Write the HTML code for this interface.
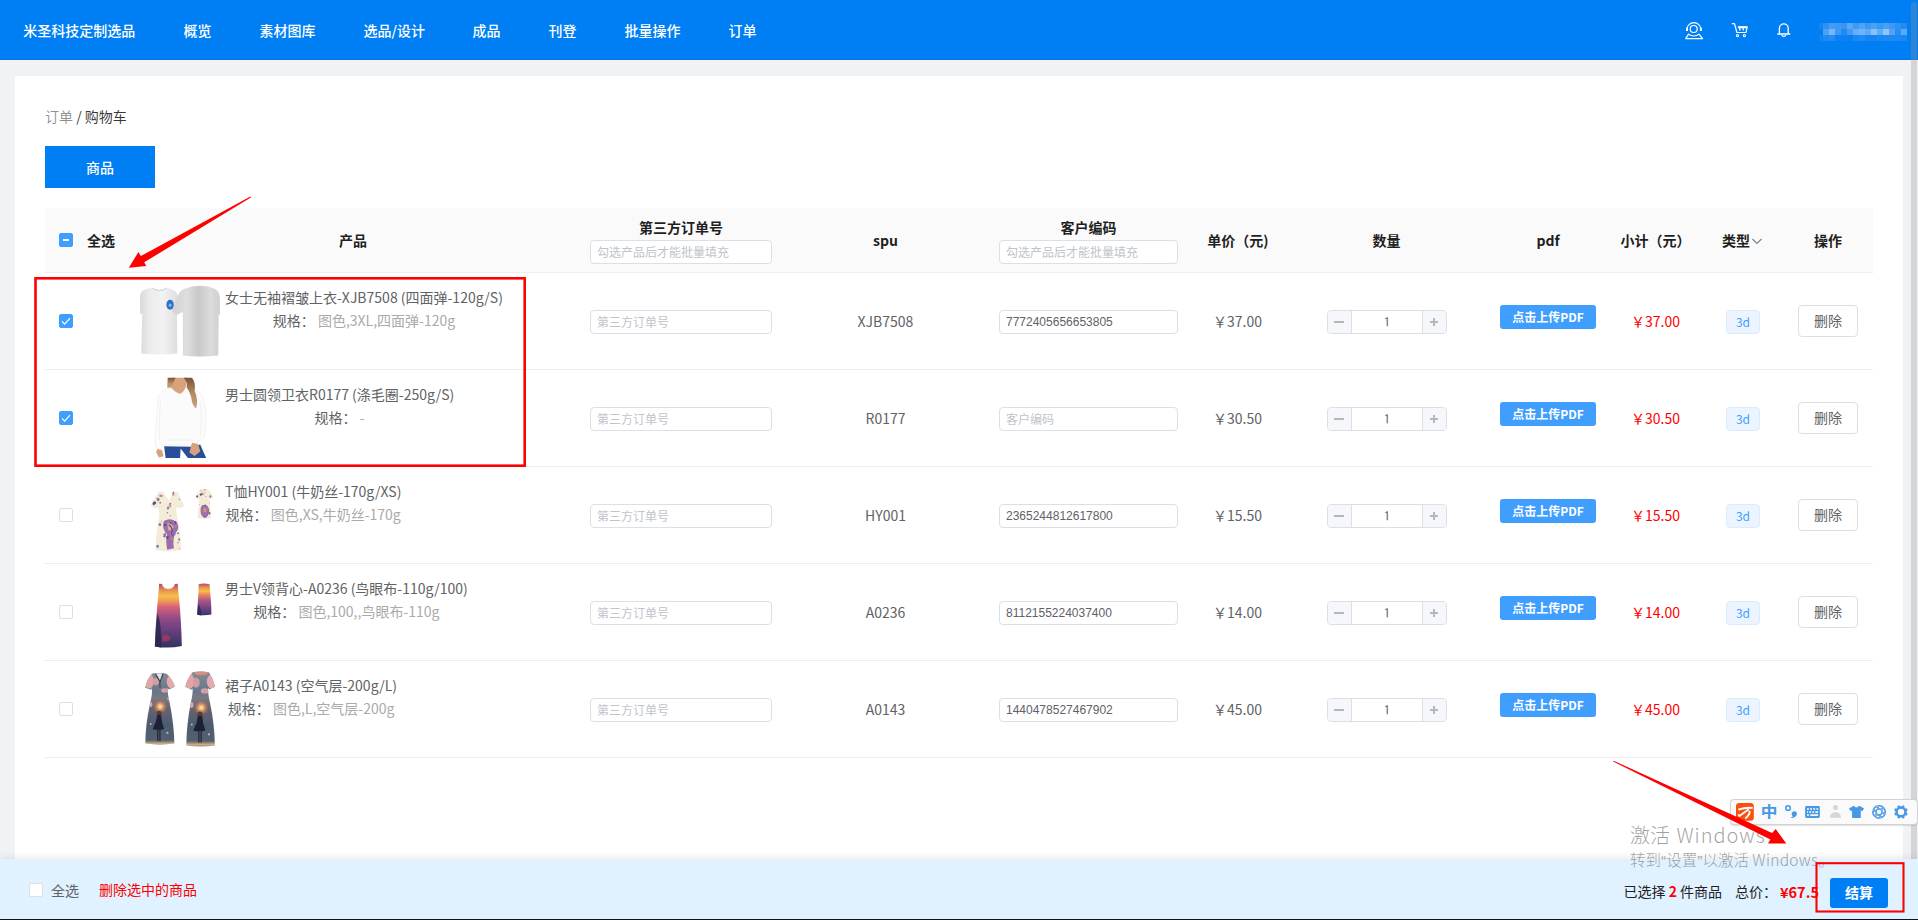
<!DOCTYPE html>
<html lang="zh-CN">
<head>
<meta charset="utf-8">
<title>购物车</title>
<style>
html,body{margin:0;padding:0;background:#f0f2f5;}
body{font-family:"Noto Sans CJK SC","Liberation Sans",sans-serif;font-size:14px;color:#606266;overflow:hidden;}
#app{position:relative;width:1918px;height:920px;overflow:hidden;background:#f0f2f5;}
#app *{box-sizing:border-box;}
.abs{position:absolute;}
.hdr{position:absolute;left:0;top:0;width:1918px;height:60px;background:#007ff4;border-bottom:1px solid #0a72e2;box-shadow:0 1px 0 #f6f4f0;}
.nav{position:absolute;top:0;height:60px;line-height:61px;color:#fff;font-size:14px;font-weight:500;white-space:nowrap;}
.card{position:absolute;left:15px;top:76px;width:1888px;height:860px;background:#fff;}
.bc{position:absolute;left:45px;top:105px;line-height:22px;font-size:14px;white-space:nowrap;color:rgba(0,0,0,.45);}
.bc b{font-weight:400;color:rgba(0,0,0,.8);}
.tabbtn{position:absolute;left:45px;top:146px;width:110px;height:42px;background:#007ff4;color:#fff;font-size:14px;font-weight:500;text-align:center;line-height:43px;}
.thead{position:absolute;left:45px;top:208px;width:1828px;height:65px;background:#fafafa;border-bottom:1px solid #ebeef5;}
.th{position:absolute;width:200px;margin-left:-100px;text-align:center;font-weight:700;color:#1f1f1f;font-size:14px;line-height:24px;white-space:nowrap;}
.cb{position:absolute;left:59px;top:41px;width:14px;height:14px;border:1px solid #dcdfe6;border-radius:2px;background:#fff;}
.cb.on{background:#409eff;border-color:#409eff;}
.cb svg{position:absolute;left:-1px;top:-1px;}
.row{position:absolute;left:0;width:1918px;height:97px;}
.row:after{content:"";position:absolute;left:45px;top:96px;width:1828px;height:1px;background:#ebeef5;}
.pimg{position:absolute;left:135px;top:3px;width:90px;height:90px;}
.pimg svg{display:block;}
.ptxt{position:absolute;left:225px;top:13px;text-align:center;white-space:nowrap;line-height:23px;color:#606266;font-size:14px;}
.sv{color:#aaa;}
.inp{position:absolute;top:37px;height:24px;border:1px solid #dcdfe6;border-radius:4px;background:#fff;font-size:12px;line-height:21px;padding-left:6px;white-space:nowrap;}
.i1{left:590px;width:182px;}
.i2{left:999px;width:179px;}
.ph{color:#c0c4cc;}
.val{font-family:"Liberation Sans",sans-serif;color:#606266;position:relative;top:-0.7px;}
.cell{position:absolute;top:36.4px;width:200px;margin-left:-100px;text-align:center;line-height:24px;white-space:nowrap;}
.spu{left:885.5px;}
.price{left:1237.5px;}
.sub{left:1655.5px;color:#ff0000;}
.qty{position:absolute;left:1327px;top:37px;width:120px;height:24px;border:1px solid #dcdfe6;border-radius:4px;background:#fff;overflow:hidden;}
.qb{position:absolute;top:0;width:24px;height:22px;background:#f5f7fa;}
.qb.minus{left:0;border-right:1px solid #dcdfe6;}
.qb.plus{right:0;border-left:1px solid #dcdfe6;}
.qb i{position:absolute;left:6px;top:10px;width:9.5px;height:1.8px;background:#b4b7bc;}
.qb.plus i{left:7px;width:8px;top:10px;}
.qb b{position:absolute;left:10.1px;top:6.9px;width:1.8px;height:8px;background:#b4b7bc;}
.qv{position:absolute;left:24px;right:24px;top:0.6px;line-height:22px;text-align:center;font-family:IPAGothic,NanumGothic,"Liberation Sans",sans-serif;font-size:13px;color:#606266;}
.pdfbtn{position:absolute;left:1500px;top:32px;width:96px;height:24px;border-radius:3px;background:#409eff;color:#fff;font-size:12px;font-weight:700;text-align:center;line-height:23px;white-space:nowrap;}
.tag{position:absolute;left:1726px;top:37px;width:34px;height:24px;border:1px solid #d9ecff;border-radius:4px;background:#ecf5ff;color:#409eff;font-size:12px;line-height:21px;text-align:center;}
.del{position:absolute;left:1798px;top:32px;width:60px;height:32px;border:1px solid #dcdfe6;border-radius:4px;background:#fff;color:#606266;font-size:14px;line-height:28px;text-align:center;}
.foot{position:absolute;left:0;top:859px;width:1918px;height:61px;background:#e0f1ff;box-shadow:0 -2px 8px rgba(0,0,0,.08);}
.foot .cb{left:29px;top:24px;}
.ft{position:absolute;white-space:nowrap;font-size:14px;line-height:24px;}
.paybtn{position:absolute;left:1830px;top:878px;width:58px;height:30px;border-radius:3px;background:#007ff4;color:#fff;font-size:14px;font-weight:700;text-align:center;line-height:29px;}
.redbox{position:absolute;border:2px solid #ff0000;}
.ime{position:absolute;left:1730.3px;top:799px;width:187.6px;height:25.8px;background:#fafafa;border:1px solid #d2d2d2;border-radius:4px;box-shadow:0 0.5px 1px rgba(0,0,0,.12);}
.wm{position:absolute;left:1630px;white-space:nowrap;color:rgba(100,100,100,.6);font-weight:300;}
.q{font-family:"Liberation Sans",sans-serif;font-weight:400;}
.sbar{position:absolute;left:1911px;top:2px;width:6px;height:870px;background:rgba(150,150,155,.31);border-radius:3px;}
.blk{position:absolute;left:0;top:918.8px;width:1918px;height:2px;background:#101010;}

</style>
</head>
<body>
<div id="app">
<div class="card"></div>
<div class="hdr"></div>
<div class="nav" style="left:23.2px">米圣科技定制选品</div>
<div class="nav" style="left:183.5px">概览</div>
<div class="nav" style="left:259.5px">素材图库</div>
<div class="nav" style="left:363.5px">选品/设计</div>
<div class="nav" style="left:472.5px">成品</div>
<div class="nav" style="left:548.5px">刊登</div>
<div class="nav" style="left:624.5px">批量操作</div>
<div class="nav" style="left:728.5px">订单</div>
<svg class="abs" style="left:1678px;top:14px" width="130" height="32" viewBox="1678 14 130 32" fill="none" stroke="#fff" stroke-width="1.3" stroke-linecap="round" stroke-linejoin="round">
<circle cx="1693.7" cy="29" r="3.5" stroke-width="1.2"/>
<path d="M1687.0 28.8 A6.94 6.94 0 0 1 1700.8 28.8" stroke-width="1.2"/>
<rect x="1686.0" y="27.5" width="2" height="3.5" rx="0.5" fill="#fff" stroke="none"/>
<rect x="1699.9" y="27.5" width="2" height="3.5" rx="0.5" fill="#fff" stroke="none"/>
<path d="M1685.7 38.6 L1688.6 34.1 A8 8 0 0 0 1699 34.1 L1702.6 38.6 Z" stroke-width="1.2"/>
<path d="M1732.3 23.7 H1734.5 L1736.9 32.5 H1746 L1747.2 26.8 H1738.2" stroke-width="1.2"/>
<path d="M1738.4 27.4 H1746.9" stroke-width="1.8" stroke-linecap="butt"/>
<path d="M1739.8 27 V30.6 M1743.2 27 V30.6" stroke-width="1.3" stroke-linecap="butt"/>
<circle cx="1737.5" cy="35.6" r="1.1" stroke-width="1.1"/>
<circle cx="1744.4" cy="35.6" r="1.1" stroke-width="1.1"/>
<path d="M1779.4 33.6 V28.2 A4.4 4.4 0 0 1 1788.2 28.2 V33.6" stroke-width="1.3"/>
<path d="M1777.8 34 H1789.8" stroke-width="1.4"/>
<path d="M1781.9 35.4 Q1783.8 37.5 1785.7 35.4" stroke-width="1.2"/>
</svg>
<svg class="abs" style="left:1818px;top:22px" width="92" height="20" viewBox="1818 22 92 20" shape-rendering="crispEdges"><rect x="1818.5" y="23" width="4.55" height="6.05" fill="#1684f3"/><rect x="1823" y="23" width="6.05" height="6.05" fill="#2a92f5"/><rect x="1829" y="23" width="6.05" height="6.05" fill="#4a9af5"/><rect x="1835" y="23" width="6.05" height="6.05" fill="#3a9af6"/><rect x="1841" y="23" width="6.05" height="6.05" fill="#3a94f5"/><rect x="1847" y="23" width="6.05" height="6.05" fill="#58a8f8"/><rect x="1853" y="23" width="6.05" height="6.05" fill="#3f98f5"/><rect x="1859" y="23" width="6.05" height="6.05" fill="#4ea4f8"/><rect x="1865" y="23" width="6.05" height="6.05" fill="#3d98f5"/><rect x="1871" y="23" width="6.05" height="6.05" fill="#48a0f7"/><rect x="1877" y="23" width="6.05" height="6.05" fill="#3a98f6"/><rect x="1883" y="23" width="6.05" height="6.05" fill="#4a9ef6"/><rect x="1889" y="23" width="6.05" height="6.05" fill="#4098f5"/><rect x="1895" y="23" width="6.05" height="6.05" fill="#2c92f5"/><rect x="1901" y="23" width="6.05" height="6.05" fill="#2488f5"/><rect x="1818.5" y="29" width="4.55" height="6.05" fill="#007ff4"/><rect x="1823" y="29" width="6.05" height="6.05" fill="#4aa2f6"/><rect x="1829" y="29" width="6.05" height="6.05" fill="#78b6f8"/><rect x="1835" y="29" width="6.05" height="6.05" fill="#3f98f5"/><rect x="1841" y="29" width="6.05" height="6.05" fill="#1a8cf3"/><rect x="1847" y="29" width="6.05" height="6.05" fill="#4a98f3"/><rect x="1853" y="29" width="6.05" height="6.05" fill="#68aef8"/><rect x="1859" y="29" width="6.05" height="6.05" fill="#6ab6f8"/><rect x="1865" y="29" width="6.05" height="6.05" fill="#62a8f8"/><rect x="1871" y="29" width="6.05" height="6.05" fill="#86c2fa"/><rect x="1877" y="29" width="6.05" height="6.05" fill="#5aaef8"/><rect x="1883" y="29" width="6.05" height="6.05" fill="#92c2fa"/><rect x="1889" y="29" width="6.05" height="6.05" fill="#5c9ef5"/><rect x="1895" y="29" width="6.05" height="6.05" fill="#2890f5"/><rect x="1901" y="29" width="6.05" height="6.05" fill="#5ea8f8"/><rect x="1818.5" y="35" width="4.55" height="6.05" fill="#0e84f3"/><rect x="1823" y="35" width="6.05" height="6.05" fill="#1e8af3"/><rect x="1829" y="35" width="6.05" height="6.05" fill="#268cf3"/><rect x="1835" y="35" width="6.05" height="6.05" fill="#0a82f3"/><rect x="1841" y="35" width="6.05" height="6.05" fill="#0a82f3"/><rect x="1847" y="35" width="6.05" height="6.05" fill="#0880f3"/><rect x="1853" y="35" width="6.05" height="6.05" fill="#1a88f3"/><rect x="1859" y="35" width="6.05" height="6.05" fill="#1e8af3"/><rect x="1865" y="35" width="6.05" height="6.05" fill="#1486f3"/><rect x="1871" y="35" width="6.05" height="6.05" fill="#1284f3"/><rect x="1877" y="35" width="6.05" height="6.05" fill="#1a88f3"/><rect x="1883" y="35" width="6.05" height="6.05" fill="#1c8af3"/><rect x="1889" y="35" width="6.05" height="6.05" fill="#1c8af3"/><rect x="1895" y="35" width="6.05" height="6.05" fill="#1c8af3"/><rect x="1901" y="35" width="6.05" height="6.05" fill="#1a88f4"/></svg>

<div class="bc">订单 <b>/ 购物车</b></div>
<div class="tabbtn">商品</div>
<div class="thead"></div>
<span class="cb on" style="top:233px"><i class="abs" style="left:3px;top:5.4px;width:6px;height:1.3px;background:#fff"></i></span>
<div class="th" style="left:101px;top:228px">全选</div>
<div class="th" style="left:353px;top:228px">产品</div>
<div class="th" style="left:681px;top:214.5px">第三方订单号</div>
<div class="inp i1" style="top:240px"><span class="ph">勾选产品后才能批量填充</span></div>
<div class="th" style="left:885.5px;top:228px">spu</div>
<div class="th" style="left:1088.5px;top:214.5px">客户编码</div>
<div class="inp i2" style="top:240px"><span class="ph">勾选产品后才能批量填充</span></div>
<div class="th" style="left:1237.8px;top:228px">单价（元)</div>
<div class="th" style="left:1386.5px;top:228px">数量</div>
<div class="th" style="left:1548px;top:228px">pdf</div>
<div class="th" style="left:1655.5px;top:228px">小计（元）</div>
<div class="th" style="left:1736px;top:228px">类型</div>
<svg class="abs" style="left:1751px;top:236px" width="12" height="10" viewBox="0 0 12 10"><path d="M1.5 3 L6 7.5 L10.5 3" fill="none" stroke="#80838a" stroke-width="1.1"/></svg>
<div class="th" style="left:1828px;top:228px">操作</div>
<div class="row" style="top:273px">
<span class="cb on"><svg width="14" height="14" viewBox="0 0 14 14"><path d="M3 7.3 L5.65 10.2 L11 4.1" fill="none" stroke="#fff" stroke-width="1.15"/></svg></span>
<div class="pimg"><svg width="90" height="90" viewBox="135 276 90 90"><defs>
<linearGradient id="g1a" x1="0" x2="1" y1="0" y2="0"><stop offset="0" stop-color="#d9d9d9"/><stop offset=".25" stop-color="#ececec"/><stop offset=".6" stop-color="#f2f2f2"/><stop offset="1" stop-color="#dcdcdc"/></linearGradient>
<linearGradient id="g1b" x1="0" x2="1" y1="0" y2="0"><stop offset="0" stop-color="#d2d2d2"/><stop offset=".3" stop-color="#dedede"/><stop offset=".55" stop-color="#c9c9c9"/><stop offset=".8" stop-color="#dcdcdc"/><stop offset="1" stop-color="#cfcfcf"/></linearGradient>
<filter id="b1" x="-10%" y="-10%" width="120%" height="120%"><feGaussianBlur stdDeviation="0.35"/></filter>
</defs>
<g filter="url(#b1)">
<path d="M152 287.6 Q159 291.5 167 287.6 L173.5 290 Q177.5 292 178.3 298 L178.8 313.5 L177 314.2 L177.4 353.6 Q160 355.5 141.2 353.4 L142.3 313.5 L140.2 314.2 L140 296 Q140.5 291 145 289.6 Z" fill="url(#g1a)"/>
<path d="M152.6 288 Q159.5 293.2 166.6 288" fill="none" stroke="#d0d0d0" stroke-width="1"/>
<ellipse cx="170.1" cy="304.8" rx="3.7" ry="5" fill="#2f6fc9"/>
<ellipse cx="170.1" cy="305.2" rx="1.5" ry="1.8" fill="#8fb4e8"/>
<path d="M192 286.6 Q200 285.2 208.5 286.4 L215 289 Q219.5 291.5 219.8 298 L220 314.5 L218.6 315 L218.3 355.5 Q200 357.6 183 355.6 L182.8 312 L177 314.8 L172.4 311.5 L179 293 Q182 289 186 288.2 Z" fill="url(#g1b)"/>
</g>
</svg></div>
<div class="ptxt"><div class="t1">女士无袖褶皱上衣-XJB7508 (四面弹-120g/S)</div><div class="t2">规格： <span class="sv">图色,3XL,四面弹-120g</span></div></div>
<div class="inp i1"><span class="ph">第三方订单号</span></div>
<div class="cell spu">XJB7508</div>
<div class="inp i2"><span class="val">7772405656653805</span></div>
<div class="cell price">￥37.00</div>
<div class="qty"><span class="qb minus"><i></i></span><span class="qv">1</span><span class="qb plus"><i></i><b></b></span></div>
<div class="pdfbtn">点击上传PDF</div>
<div class="cell sub">￥37.00</div>
<div class="tag">3d</div>
<div class="del">删除</div>
</div>
<div class="row" style="top:370px">
<span class="cb on"><svg width="14" height="14" viewBox="0 0 14 14"><path d="M3 7.3 L5.65 10.2 L11 4.1" fill="none" stroke="#fff" stroke-width="1.15"/></svg></span>
<div class="pimg"><svg width="90" height="90" viewBox="135 373 90 90"><defs><filter id="b2" x="-10%" y="-10%" width="120%" height="120%"><feGaussianBlur stdDeviation="0.5"/></filter>
<linearGradient id="g2h" x1="0" x2="0" y1="0" y2="1"><stop offset="0" stop-color="#7a5236"/><stop offset=".5" stop-color="#b08a62"/><stop offset="1" stop-color="#c9a57c"/></linearGradient></defs>
<g filter="url(#b2)">
<path d="M170 388 Q160 390 158 398 L155.5 430 Q153.5 440 156 448 L161 449 L165 444.5 L194 445.5 L199 441 L204 437 Q207.5 425 205 405 Q203 393 196 390 L191 388.5 Q182 397 172 388 Z" fill="#fbfbfb" stroke="#ebebeb" stroke-width="0.6"/>
<path d="M160.5 400 Q158.5 420 159.5 440 M200.5 402 Q202.5 420 200.5 436 M166 440 H193" stroke="#efefef" stroke-width="0.8" fill="none"/>
<path d="M171.3 377.7 L186.3 377.7 L186.3 385.5 Q183.7 393.2 179.6 393.8 Q174.4 392.2 170.8 387.0 Z" fill="#d8a27c"/>
<path d="M167.7 377.7 L175.5 377.7 Q173.4 382.4 171.3 387.8 L167.2 387.8 Z" fill="url(#g2h)"/>
<path d="M183.7 377.7 L192.0 377.7 Q196.1 383.4 194.6 390.7 Q198.7 400.0 196.1 408.4 Q192.0 405.6 191.2 396.9 Q189.4 390.7 186.6 387.6 Q187.9 382.4 183.7 377.7 Z" fill="url(#g2h)"/>
<path d="M164.1 446.2 L192.0 446.7 L200.2 444.4 L206.2 458.0 L187.9 458.0 L180.6 448.5 L180.1 458.0 L165.6 458.0 Z" fill="#2c4f9a"/>
<path d="M157.1 449.0 L162.0 450.1 L163.6 456.3 L158.9 457.6 L156.3 452.6 Z" fill="#d8a27c"/>
<path d="M192.0 442.8 L198.2 443.9 L200.2 451.6 L194.6 456.0 L189.4 452.6 L191.0 446.4 Z" fill="#d8a27c"/>
</g></svg></div>
<div class="ptxt"><div class="t1">男士圆领卫衣R0177 (涤毛圈-250g/S)</div><div class="t2">规格： <span class="sv">-</span></div></div>
<div class="inp i1"><span class="ph">第三方订单号</span></div>
<div class="cell spu">R0177</div>
<div class="inp i2"><span class="ph">客户编码</span></div>
<div class="cell price">￥30.50</div>
<div class="qty"><span class="qb minus"><i></i></span><span class="qv">1</span><span class="qb plus"><i></i><b></b></span></div>
<div class="pdfbtn">点击上传PDF</div>
<div class="cell sub">￥30.50</div>
<div class="tag">3d</div>
<div class="del">删除</div>
</div>
<div class="row" style="top:467px">
<span class="cb"></span>
<div class="pimg"><svg width="90" height="90" viewBox="135 470 90 90"><defs><filter id="b3" x="-10%" y="-10%" width="120%" height="120%"><feGaussianBlur stdDeviation="0.45"/></filter>
<clipPath id="c3a"><path d="M158.4 491.7 L163.3 491.7 L169.1 501.3 L173.1 491.5 L177.9 492.0 L184.3 506.2 L178.9 508.6 L176.8 506.7 Q176.0 511.1 176.8 515.0 Q180.9 533.6 180.9 549.7 Q169.1 553.2 155.6 549.7 Q155.9 533.6 159.4 515.0 Q159.4 511.1 157.9 507.0 L155.6 508.4 L150.7 505.7 Z"/></clipPath><clipPath id="c3b"><path d="M199.7 490.1 Q204.9 488.4 209.7 490.4 L213.2 496.9 L210.7 498.4 L209.7 497.6 Q209.3 502.3 210.0 506.2 Q211.2 513.1 210.4 518.1 Q204.4 519.4 197.7 518.1 Q197.5 512.1 199.0 506.2 Q199.3 502.3 198.7 498.2 L197.5 499.2 L195.1 497.2 Z"/></clipPath></defs>
<g filter="url(#b3)">
<g clip-path="url(#c3a)"><rect x="148" y="488" width="40" height="66" fill="#f3ecd6"/>
<ellipse cx="161.7" cy="495.9" rx="1.2" ry="0.8" fill="#8d62b4" opacity="0.88"/><ellipse cx="170.2" cy="515.7" rx="0.8" ry="0.5" fill="#8d62b4" opacity="0.72"/><ellipse cx="154.0" cy="503.0" rx="1.3" ry="1.6" fill="#8d62b4" opacity="0.93"/><ellipse cx="170.2" cy="493.6" rx="1.1" ry="0.7" fill="#7b52a6" opacity="0.94"/><ellipse cx="179.3" cy="499.5" rx="0.7" ry="0.8" fill="#8d62b4" opacity="0.78"/><ellipse cx="173.5" cy="494.7" rx="1.1" ry="1.2" fill="#d9844c" opacity="0.70"/><ellipse cx="153.1" cy="493.5" rx="0.8" ry="0.7" fill="#4b3a92" opacity="0.72"/><ellipse cx="170.3" cy="503.8" rx="0.9" ry="0.7" fill="#5a45a0" opacity="0.83"/><ellipse cx="170.0" cy="505.7" rx="1.4" ry="2.1" fill="#c77aa0" opacity="0.67"/><ellipse cx="154.9" cy="502.9" rx="1.3" ry="1.3" fill="#5a45a0" opacity="0.92"/><ellipse cx="182.7" cy="494.0" rx="1.1" ry="1.0" fill="#a684c6" opacity="0.69"/><ellipse cx="167.4" cy="512.7" rx="0.7" ry="0.7" fill="#8d62b4" opacity="0.93"/><ellipse cx="172.9" cy="493.6" rx="1.2" ry="1.2" fill="#c77aa0" opacity="0.66"/><ellipse cx="173.1" cy="492.6" rx="1.0" ry="1.1" fill="#5a45a0" opacity="0.79"/><ellipse cx="158.2" cy="499.5" rx="1.3" ry="1.8" fill="#6a3f96" opacity="0.71"/><ellipse cx="153.7" cy="503.7" rx="1.1" ry="1.5" fill="#5a45a0" opacity="0.88"/><ellipse cx="160.2" cy="502.8" rx="0.9" ry="0.7" fill="#6a3f96" opacity="0.93"/><ellipse cx="156.8" cy="498.0" rx="0.8" ry="0.6" fill="#c77aa0" opacity="0.88"/><ellipse cx="160.3" cy="495.8" rx="1.1" ry="1.3" fill="#a684c6" opacity="0.93"/><ellipse cx="168.0" cy="508.1" rx="1.2" ry="1.7" fill="#7b52a6" opacity="0.73"/><ellipse cx="182.4" cy="509.7" rx="1.1" ry="0.8" fill="#6a3f96" opacity="0.71"/><ellipse cx="171.9" cy="493.6" rx="0.7" ry="0.5" fill="#d9844c" opacity="0.73"/>
<path d="M163.8 520.9 Q171.1 517.0 177.0 522.8 Q179.9 528.7 176.0 532.6 Q172.1 538.5 174.0 548.3 L167.2 549.7 Q165.2 540.5 167.2 534.6 Q161.3 528.7 163.8 520.9 Z" fill="#8350a0" opacity=".8"/>
<path d="M167.2 523.3 Q172.1 522.8 173.5 527.7 Q171.1 532.6 168.2 529.7 Z" fill="#e6b68a" opacity=".9"/>
<path d="M169.1 524.8 Q174.0 528.7 171.1 534.6" stroke="#6a3c90" stroke-width="1.1" fill="none"/>
<ellipse cx="170.8" cy="523.1" rx="1.0" ry="0.9" fill="#4b3a92" opacity="0.59"/><ellipse cx="157.6" cy="546.2" rx="1.1" ry="1.5" fill="#5a45a0" opacity="0.80"/><ellipse cx="170.9" cy="534.2" rx="0.6" ry="0.6" fill="#c77aa0" opacity="0.95"/><ellipse cx="168.1" cy="522.6" rx="0.6" ry="0.6" fill="#a684c6" opacity="0.85"/><ellipse cx="172.9" cy="535.5" rx="0.7" ry="0.8" fill="#4b3a92" opacity="0.69"/><ellipse cx="178.0" cy="542.7" rx="0.8" ry="0.6" fill="#8d62b4" opacity="0.83"/><ellipse cx="165.4" cy="525.0" rx="1.2" ry="1.3" fill="#4b3a92" opacity="0.77"/><ellipse cx="171.6" cy="538.4" rx="1.2" ry="1.6" fill="#d9844c" opacity="0.87"/><ellipse cx="174.0" cy="526.8" rx="1.0" ry="1.4" fill="#a684c6" opacity="0.84"/><ellipse cx="175.2" cy="534.2" rx="0.7" ry="1.0" fill="#a684c6" opacity="0.73"/><ellipse cx="179.7" cy="548.7" rx="0.8" ry="0.8" fill="#d9844c" opacity="0.59"/><ellipse cx="164.8" cy="534.5" rx="1.4" ry="1.6" fill="#7b52a6" opacity="0.74"/><ellipse cx="175.4" cy="522.5" rx="1.1" ry="1.4" fill="#6a3f96" opacity="0.86"/><ellipse cx="168.0" cy="525.4" rx="1.2" ry="1.8" fill="#a684c6" opacity="0.58"/><ellipse cx="173.6" cy="533.9" rx="1.2" ry="0.9" fill="#8d62b4" opacity="0.84"/><ellipse cx="159.9" cy="524.5" rx="1.3" ry="1.5" fill="#5a45a0" opacity="0.79"/><ellipse cx="167.9" cy="548.1" rx="0.6" ry="0.4" fill="#4b3a92" opacity="0.60"/><ellipse cx="179.3" cy="539.5" rx="1.0" ry="1.3" fill="#5a45a0" opacity="0.72"/><ellipse cx="176.0" cy="526.3" rx="0.7" ry="0.9" fill="#e6a05e" opacity="0.75"/><ellipse cx="164.5" cy="536.3" rx="1.3" ry="1.1" fill="#7b52a6" opacity="0.91"/><ellipse cx="167.5" cy="537.5" rx="1.3" ry="1.8" fill="#6a3f96" opacity="0.88"/><ellipse cx="160.0" cy="524.6" rx="1.0" ry="1.1" fill="#c77aa0" opacity="0.86"/><ellipse cx="174.8" cy="524.5" rx="0.6" ry="0.6" fill="#8d62b4" opacity="0.77"/><ellipse cx="168.9" cy="536.7" rx="1.2" ry="0.8" fill="#8d62b4" opacity="0.90"/><ellipse cx="161.4" cy="521.3" rx="0.6" ry="0.8" fill="#c77aa0" opacity="0.77"/><ellipse cx="178.0" cy="533.3" rx="1.1" ry="0.8" fill="#4b3a92" opacity="0.79"/>
<path d="M163.8 492.3 L169.1 500.8 L172.8 492.1 Z" fill="#e9e9f0"/>
</g>
<g clip-path="url(#c3b)"><rect x="194" y="487" width="21" height="33" fill="#f2ebd6"/>
<ellipse cx="200.7" cy="494.6" rx="1.0" ry="1.2" fill="#4b3a92" opacity="0.93"/><ellipse cx="210.9" cy="499.4" rx="0.7" ry="0.5" fill="#4b3a92" opacity="0.91"/><ellipse cx="203.6" cy="493.6" rx="0.7" ry="0.6" fill="#a684c6" opacity="0.58"/><ellipse cx="197.2" cy="496.4" rx="1.0" ry="1.1" fill="#5a45a0" opacity="0.93"/><ellipse cx="202.2" cy="491.8" rx="0.6" ry="0.8" fill="#c77aa0" opacity="0.64"/><ellipse cx="202.8" cy="494.4" rx="1.1" ry="1.1" fill="#d9844c" opacity="0.61"/><ellipse cx="204.8" cy="492.7" rx="0.6" ry="0.6" fill="#a684c6" opacity="0.59"/><ellipse cx="201.7" cy="494.0" rx="0.9" ry="1.1" fill="#6a3f96" opacity="0.68"/><ellipse cx="204.7" cy="489.7" rx="1.1" ry="0.8" fill="#d9844c" opacity="0.94"/><ellipse cx="200.5" cy="489.4" rx="1.0" ry="1.3" fill="#e6a05e" opacity="0.85"/><ellipse cx="210.4" cy="496.4" rx="1.1" ry="1.5" fill="#6a3f96" opacity="0.61"/><ellipse cx="205.7" cy="496.7" rx="0.6" ry="0.4" fill="#7b52a6" opacity="0.87"/>
<path d="M201.9 505.2 Q207.3 503.3 209.1 509.1 Q209.7 516.0 205.3 517.9 Q200.5 517.0 200.6 511.1 Q200.5 507.2 201.9 505.2 Z" fill="#8652a2" opacity=".8"/>
<ellipse cx="204.9" cy="510.1" rx="1.6" ry="2.2" fill="#e0966a"/>
<ellipse cx="210.5" cy="506.3" rx="0.4" ry="0.3" fill="#8d62b4" opacity="0.87"/><ellipse cx="210.0" cy="503.1" rx="0.9" ry="1.4" fill="#c77aa0" opacity="0.55"/><ellipse cx="203.8" cy="516.6" rx="0.8" ry="0.6" fill="#7b52a6" opacity="0.76"/><ellipse cx="199.5" cy="504.6" rx="0.4" ry="0.5" fill="#d9844c" opacity="0.92"/><ellipse cx="205.4" cy="505.3" rx="0.7" ry="0.9" fill="#5a45a0" opacity="0.66"/><ellipse cx="211.9" cy="502.6" rx="0.4" ry="0.3" fill="#4b3a92" opacity="0.77"/><ellipse cx="204.6" cy="517.0" rx="0.5" ry="0.5" fill="#6a3f96" opacity="0.81"/><ellipse cx="210.4" cy="517.5" rx="0.6" ry="0.5" fill="#d9844c" opacity="0.94"/><ellipse cx="209.7" cy="513.3" rx="0.8" ry="1.2" fill="#6a3f96" opacity="0.95"/><ellipse cx="209.7" cy="502.2" rx="0.8" ry="0.5" fill="#e6a05e" opacity="0.72"/>
</g>
</g></svg></div>
<div class="ptxt"><div class="t1">T恤HY001 (牛奶丝-170g/XS)</div><div class="t2">规格： <span class="sv">图色,XS,牛奶丝-170g</span></div></div>
<div class="inp i1"><span class="ph">第三方订单号</span></div>
<div class="cell spu">HY001</div>
<div class="inp i2"><span class="val">2365244812617800</span></div>
<div class="cell price">￥15.50</div>
<div class="qty"><span class="qb minus"><i></i></span><span class="qv">1</span><span class="qb plus"><i></i><b></b></span></div>
<div class="pdfbtn">点击上传PDF</div>
<div class="cell sub">￥15.50</div>
<div class="tag">3d</div>
<div class="del">删除</div>
</div>
<div class="row" style="top:564px">
<span class="cb"></span>
<div class="pimg"><svg width="90" height="90" viewBox="135 567 90 90"><defs><filter id="b4" x="-10%" y="-10%" width="120%" height="120%"><feGaussianBlur stdDeviation="0.4"/></filter>
<linearGradient id="g4" x1="0" x2="0" y1="0" y2="1"><stop offset="0" stop-color="#a84a78"/><stop offset=".1" stop-color="#e8904a"/><stop offset=".19" stop-color="#f6bf4a"/><stop offset=".27" stop-color="#f09a55"/><stop offset=".36" stop-color="#d8627a"/><stop offset=".55" stop-color="#8e4a86"/><stop offset=".8" stop-color="#5a3c78"/><stop offset="1" stop-color="#33305e"/></linearGradient>
<linearGradient id="g4b" x1="0" x2="0" y1="0" y2="1"><stop offset="0" stop-color="#a84a78"/><stop offset=".12" stop-color="#ea944a"/><stop offset=".24" stop-color="#f6bf4a"/><stop offset=".36" stop-color="#e8805e"/><stop offset=".55" stop-color="#a8528a"/><stop offset=".85" stop-color="#5e3e7c"/><stop offset="1" stop-color="#3a3464"/></linearGradient></defs>
<g filter="url(#b4)">
<path d="M159 583.8 L162.3 584 Q163 588.6 168.2 588.8 Q173.6 588.6 174.6 584 L177.8 583.8 Q178 592 179 597 Q181.5 625 181.8 646 Q168 649 154.8 646.4 Q155.6 622 158 597 Q159 591 159 583.8 Z" fill="url(#g4)"/>
<path d="M162.3 584.2 Q163 588.6 168.2 588.8 Q173.6 588.6 174.6 584.2" fill="none" stroke="#eadde4" stroke-width=".8"/>
<path d="M155 646.4 Q155.4 630 157.5 613 Q162 625 161 647.5 Z" fill="#242a52" opacity=".85"/>
<path d="M162 636 q5 -3 9 2 q-3 5 -9 3 z" fill="#b03a5a" opacity=".7"/>
<path d="M198.6 584.2 Q204 583 209.6 584.2 Q210 592 210.6 597 Q211.6 607 211.4 614.6 Q204 616 197.2 614.8 Q197.4 606 198.2 597 Q198.6 591 198.6 584.2 Z" fill="url(#g4b)"/>
<path d="M197.3 614.8 Q197.4 609 198.4 604 Q201.5 609 201.5 615.4 Z" fill="#242a52" opacity=".8"/>
</g></svg></div>
<div class="ptxt"><div class="t1">男士V领背心-A0236 (鸟眼布-110g/100)</div><div class="t2">规格： <span class="sv">图色,100,,鸟眼布-110g</span></div></div>
<div class="inp i1"><span class="ph">第三方订单号</span></div>
<div class="cell spu">A0236</div>
<div class="inp i2"><span class="val">8112155224037400</span></div>
<div class="cell price">￥14.00</div>
<div class="qty"><span class="qb minus"><i></i></span><span class="qv">1</span><span class="qb plus"><i></i><b></b></span></div>
<div class="pdfbtn">点击上传PDF</div>
<div class="cell sub">￥14.00</div>
<div class="tag">3d</div>
<div class="del">删除</div>
</div>
<div class="row" style="top:661px">
<span class="cb"></span>
<div class="pimg"><svg width="90" height="90" viewBox="135 664 90 90"><defs><filter id="b5" x="-10%" y="-10%" width="120%" height="120%"><feGaussianBlur stdDeviation="0.5"/></filter>
<linearGradient id="g5" x1="0" x2="0" y1="0" y2="1"><stop offset="0" stop-color="#8a8f98"/><stop offset=".28" stop-color="#66768a"/><stop offset=".36" stop-color="#7a7880"/><stop offset=".48" stop-color="#6a6470"/><stop offset=".7" stop-color="#4c5c70"/><stop offset=".9" stop-color="#52616f"/><stop offset=".945" stop-color="#cfae86"/><stop offset="1" stop-color="#5c5560"/></linearGradient>
<radialGradient id="g5s"><stop offset="0" stop-color="#fff4cc"/><stop offset=".3" stop-color="#f8b068"/><stop offset="1" stop-color="#b87060" stop-opacity="0"/></radialGradient>
<clipPath id="c5a"><path d="M152.2 673.4 L154.8 673.2 L163.6 673.2 L166.2 673.6 Q172.4 678.5 174.8 686.8 L168.7 689.4 L167.7 687.8 Q167.2 693.0 169.8 703.3 Q173.9 724.0 174.4 743.6 Q160.0 745.9 145.3 743.6 Q145.5 724.0 150.1 703.3 Q152.7 693.0 151.9 688.3 L151.2 689.7 L145.3 687.8 Q147.0 678.5 152.2 673.4 Z"/></clipPath>
<clipPath id="c5b"><path d="M192.5 672.3 Q200.8 670.5 209.0 672.3 Q213.2 678.5 215.1 686.8 L209.0 689.4 L208.2 687.8 Q207.7 693.0 210.1 703.3 Q214.5 724.0 214.9 745.5 Q200.8 747.7 186.3 745.5 Q186.6 724.0 190.7 703.3 Q193.2 693.0 192.5 688.3 L191.8 689.7 L185.3 686.8 Q187.3 678.5 192.5 672.3 Z"/></clipPath></defs>
<g filter="url(#b5)">
<g clip-path="url(#c5a)"><rect x="143" y="670" width="36" height="78" fill="url(#g5)"/>
<ellipse cx="149.1" cy="681.1" rx="4.6" ry="7.5" fill="#e3a6a8"/><ellipse cx="171.3" cy="681.6" rx="4.6" ry="6.5" fill="#e6aaac"/>
<ellipse cx="155.8" cy="681.6" rx="3.2" ry="3.6" fill="#dba0a4" opacity=".9"/><ellipse cx="164.6" cy="690.4" rx="3.4" ry="2.2" fill="#e0a4aa" opacity=".9"/><ellipse cx="150.7" cy="704.4" rx="1.8" ry="2.6" fill="#e0a4aa"/><ellipse cx="168.7" cy="698.7" rx="1.4" ry="1.6" fill="#e0a4aa"/>
<circle cx="160.2" cy="706.6" r="7.2" fill="url(#g5s)"/>
<ellipse cx="159.1" cy="713.7" rx="2.6" ry="3" fill="#5a3a34"/>
<path d="M157.1 715.7 Q159.1 713.7 161.2 715.7 L162.0 721.9 L164.1 728.9 Q158.4 730.7 152.7 728.9 L155.8 721.9 Z" fill="#1c2034"/>
<rect x="157.1" y="729.1" width="1.3" height="12" fill="#2c2630"/><rect x="159.3" y="729.1" width="1.3" height="12" fill="#2c2630"/>
<circle cx="167.4" cy="732.8" r="1.1" fill="#e4a6ac"/><circle cx="150.7" cy="724.0" r="1" fill="#e4a6ac"/>
<path d="M155.1 673.6 L160.0 681.8 L163.3 673.6" stroke="#2c3040" stroke-width=".9" fill="none"/><path d="M160.0 681.8 V687.8" stroke="#2c3040" stroke-width=".8"/>
<path d="M156.3 673.6 L160.0 680.1 L162.2 673.6 Z" fill="#e4e4ea"/>
</g>
<g clip-path="url(#c5b)"><rect x="184" y="669" width="37" height="80" fill="url(#g5)"/>
<ellipse cx="189.4" cy="681.1" rx="4.8" ry="8" fill="#e3a6a8"/><ellipse cx="211.6" cy="681.6" rx="4.8" ry="7" fill="#e6aaac"/>
<ellipse cx="201.3" cy="672.8" rx="7" ry="2.4" fill="#d98c80"/><ellipse cx="196.1" cy="682.7" rx="3.6" ry="5" fill="#dba0a4" opacity=".9"/><ellipse cx="204.9" cy="690.9" rx="4.2" ry="2.6" fill="#e0a4aa" opacity=".9"/><ellipse cx="191.5" cy="704.9" rx="2" ry="2.8" fill="#e0a4aa"/>
<circle cx="201.3" cy="707.7" r="7.6" fill="url(#g5s)"/>
<ellipse cx="200.0" cy="714.7" rx="2.7" ry="3.1" fill="#5a3a34"/>
<path d="M197.7 716.8 Q200.0 714.7 202.3 716.8 L203.1 723.0 L205.4 730.4 Q199.4 732.2 193.2 730.4 L196.6 723.0 Z" fill="#1c2034"/>
<rect x="198.2" y="730.6" width="1.3" height="12" fill="#2c2630"/><rect x="200.5" y="730.6" width="1.3" height="12" fill="#2c2630"/>
<circle cx="209.0" cy="734.3" r="1.1" fill="#e4a6ac"/><circle cx="191.8" cy="724.5" r="1" fill="#e4a6ac"/>
</g>
</g></svg></div>
<div class="ptxt"><div class="t1">裙子A0143 (空气层-200g/L)</div><div class="t2">规格： <span class="sv">图色,L,空气层-200g</span></div></div>
<div class="inp i1"><span class="ph">第三方订单号</span></div>
<div class="cell spu">A0143</div>
<div class="inp i2"><span class="val">1440478527467902</span></div>
<div class="cell price">￥45.00</div>
<div class="qty"><span class="qb minus"><i></i></span><span class="qv">1</span><span class="qb plus"><i></i><b></b></span></div>
<div class="pdfbtn">点击上传PDF</div>
<div class="cell sub">￥45.00</div>
<div class="tag">3d</div>
<div class="del">删除</div>
</div>
<div class="sbar"></div>
<div class="foot"><span class="cb"></span></div>
<div class="ft" style="left:51px;top:877.7px;color:#606266">全选</div>
<div class="ft" style="left:99px;top:876.5px;color:#ff0000">删除选中的商品</div>
<div class="ft" style="left:1623.5px;top:878.5px;color:#222">已选择 <b style="color:#ff0000">2</b> 件商品</div>
<div class="ft" style="left:1735px;top:878.5px;color:#222">总价：</div>
<div class="ft" style="left:1780px;top:879.5px;color:#ff0000;font-weight:700;font-size:14.5px">¥67.5</div>
<div class="paybtn">结算</div>
<div class="ime"></div>
<svg class="abs" style="left:1726px;top:794px" width="192" height="36" viewBox="1726 794 192 36"><rect x="1736" y="803" width="17.8" height="17.8" rx="3.2" fill="#f8500f"/><g fill="none" stroke="#fff" stroke-linecap="butt" stroke-linejoin="round"><path d="M1738.31 809.62 Q1746.02 807.11 1752.63 808.01" stroke-width="1.9"/><path d="M1748.77 809.27 L1739.41 816.02 L1738.26 814.27" stroke-width="1.8"/><path d="M1749.42 810.77 Q1750.62 814.27 1745.27 818.42" stroke-width="1.8"/></g><text x="0" y="0" transform="translate(1769 817.1) scale(1.08 0.95)" font-family="Noto Sans CJK SC, Liberation Sans, sans-serif" font-size="15.5" font-weight="700" fill="#4799e6" text-anchor="middle">中</text><circle cx="1788.06" cy="808.01" r="2.3" fill="none" stroke="#4799e6" stroke-width="1.6"/><path d="M1794.47 811.17 C1798.07 811.17 1798.32 817.52 1791.32 818.12 L1790.96 817.12 C1792.82 816.62 1793.67 815.77 1793.57 816.37 C1791.07 816.02 1790.81 811.17 1794.47 811.17 Z" fill="#4799e6"/><rect x="1805.08" y="806.01" width="14.76" height="11.91" rx="1.3" fill="#4799e6"/><rect x="1807.08" y="808.16" width="1.75" height="1.61" fill="#fff"/><rect x="1810.23" y="808.16" width="1.76" height="1.61" fill="#fff"/><rect x="1813.39" y="808.16" width="1.75" height="1.61" fill="#fff"/><rect x="1816.54" y="808.16" width="1.55" height="1.61" fill="#fff"/><rect x="1807.08" y="811.27" width="1.0" height="1.6" fill="#fff"/><rect x="1809.33" y="811.27" width="1.76" height="1.6" fill="#fff"/><rect x="1812.34" y="811.27" width="1.75" height="1.6" fill="#fff"/><rect x="1815.34" y="811.27" width="2.75" height="1.6" fill="#fff"/><rect x="1807.08" y="814.27" width="1.75" height="1.6" fill="#fff"/><rect x="1810.23" y="814.27" width="7.86" height="1.6" fill="#fff"/><circle cx="1835.51" cy="807.51" r="2.6" fill="#d6d6d6"/><path d="M1830.01 817.77 C1830.01 810.52 1841.02 810.52 1841.02 817.77 Z" fill="#d6d6d6"/><path d="M1849.03 808.51 L1853.28 806.01 L1854.53 806.16 Q1856.53 809.02 1858.54 806.16 L1859.79 806.01 L1864.04 808.51 L1862.29 811.37 L1860.79 810.52 L1860.79 817.27 Q1860.79 817.92 1860.04 817.92 L1852.78 817.92 Q1852.03 817.92 1852.03 817.27 L1852.03 810.52 L1850.78 811.37 Z" fill="#4799e6"/><circle cx="1879.06" cy="811.92" r="6.4" fill="none" stroke="#4799e6" stroke-width="1.1"/><ellipse cx="1879.06" cy="811.92" rx="2.7" ry="6.2" fill="none" stroke="#4799e6" stroke-width="0.95" transform="rotate(15 1879.06 811.92)"/><ellipse cx="1879.06" cy="811.92" rx="2.7" ry="6.2" fill="none" stroke="#4799e6" stroke-width="0.95" transform="rotate(75 1879.06 811.92)"/><ellipse cx="1879.06" cy="811.92" rx="2.7" ry="6.2" fill="none" stroke="#4799e6" stroke-width="0.95" transform="rotate(135 1879.06 811.92)"/><circle cx="1879.06" cy="811.92" r="1.1" fill="#fafafa"/><path d="M1900.98 806.22 L1901.97 806.31 L1902.60 805.16 L1904.61 805.99 L1904.25 807.25 L1905.01 807.89 L1905.65 808.65 L1906.91 808.29 L1907.74 810.30 L1906.59 810.93 L1906.68 811.92 L1906.59 812.91 L1907.74 813.54 L1906.91 815.55 L1905.65 815.19 L1905.01 815.95 L1904.25 816.59 L1904.61 817.85 L1902.60 818.68 L1901.97 817.53 L1900.98 817.62 L1899.99 817.53 L1899.36 818.68 L1897.35 817.85 L1897.71 816.59 L1896.95 815.95 L1896.31 815.19 L1895.05 815.55 L1894.22 813.54 L1895.37 812.91 L1895.28 811.92 L1895.37 810.93 L1894.22 810.30 L1895.05 808.29 L1896.31 808.65 L1896.95 807.89 L1897.71 807.25 L1897.35 805.99 L1899.36 805.16 L1899.99 806.31 Z M1904.13 811.92 A3.15 3.15 0 1 0 1897.83 811.92 A3.15 3.15 0 1 0 1904.13 811.92 Z" fill="#4799e6" fill-rule="evenodd"/></svg>

<div class="wm" style="top:821px;font-size:20px;line-height:28px">激活<span style="letter-spacing:.95px;margin-left:6.5px">Windows</span></div>
<div class="wm" style="top:849px;font-size:15.5px;line-height:20px">转到<span class="q">“</span>设置<span class="q">”</span>以激活 <span style="letter-spacing:.3px">Windows</span>。</div>
<svg class="abs" style="left:0;top:0" width="1918" height="920" viewBox="0 0 1918 920"><rect x="35.5" y="278.3" width="489.2" height="187.4" fill="none" stroke="#ff0000" stroke-width="2.6"/><rect x="1816.5" y="863.2" width="87" height="48.3" fill="none" stroke="#ff0000" stroke-width="2.1"/><path d="M250.4 196.5 L140.8 256.1 L138.5 251.9 L128.8 267.8 L146.2 266 L144.2 262.3 L250.9 197.4 Z" fill="#ff0000"/><path d="M1613.6 760.7 L1772.1 833.1 L1775.7 829.1 L1786.3 843.6 L1768 843.6 L1770.4 839.4 L1613.2 761.6 Z" fill="#ff0000"/></svg>
<div class="blk"></div>
</div>
</body>
</html>
